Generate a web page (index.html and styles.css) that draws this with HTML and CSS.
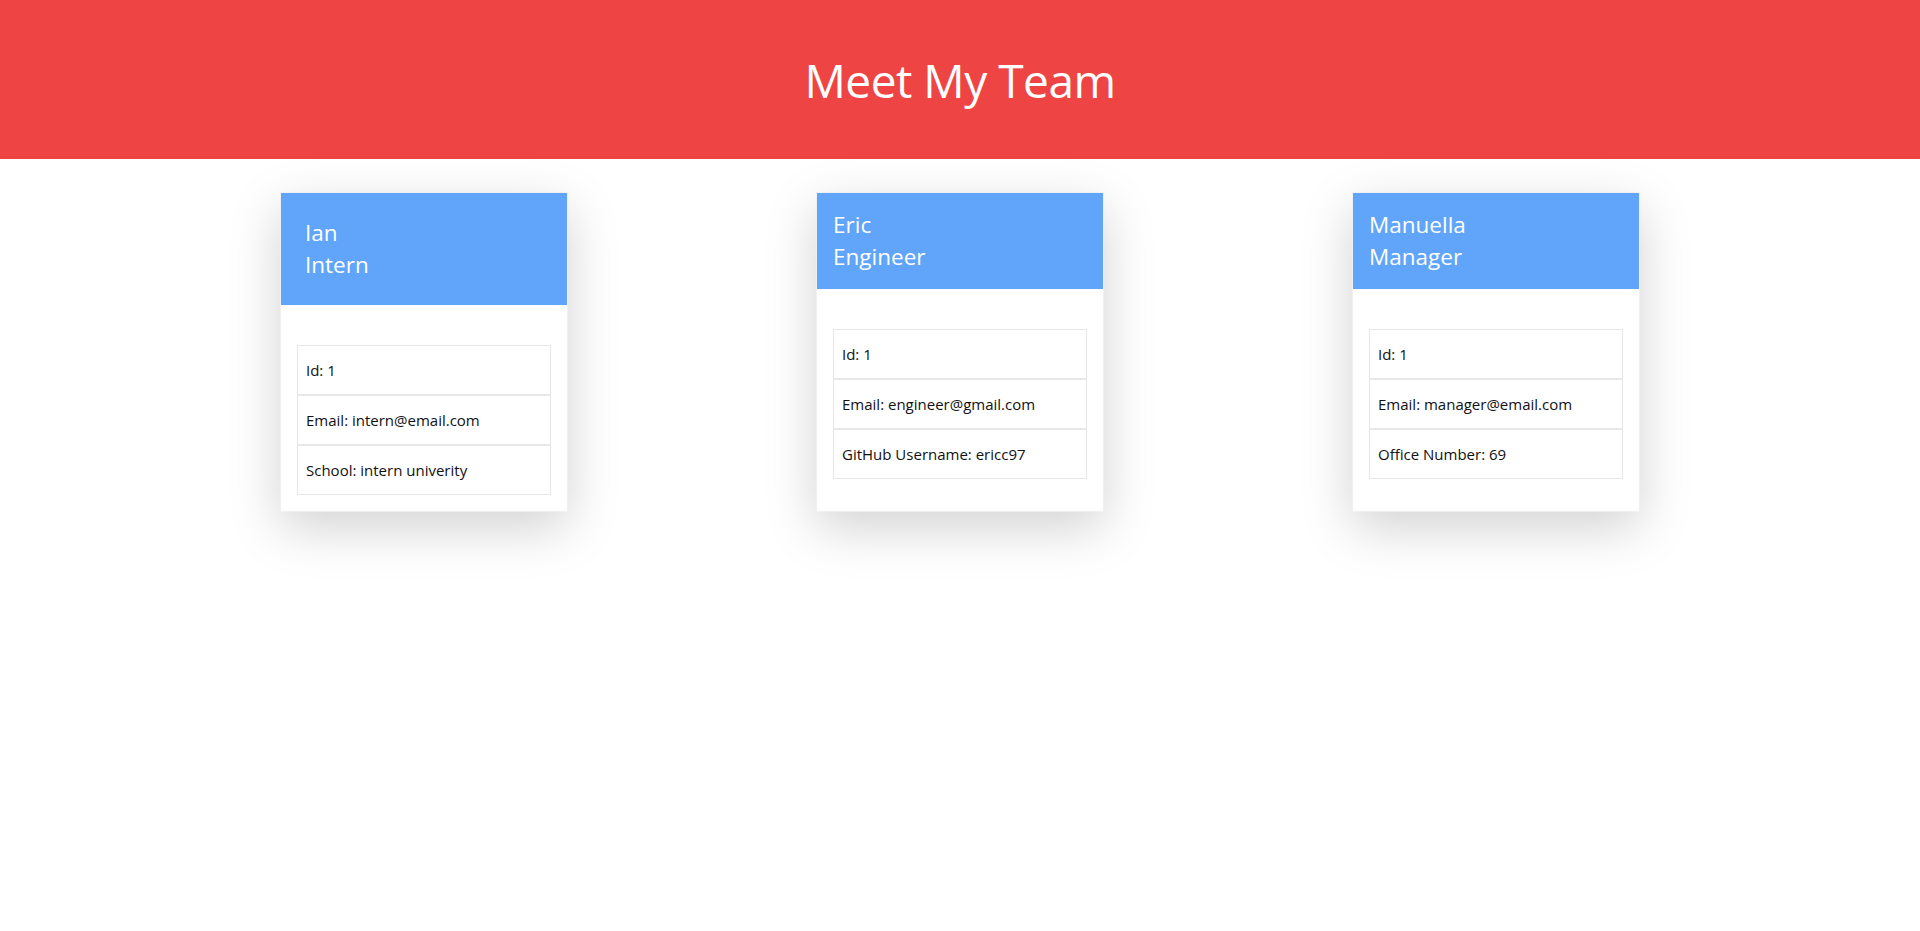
FILE: index.html
```html
<!DOCTYPE html>
<html lang="en">
<head>
<meta charset="UTF-8">
<title>Meet My Team</title>
<link rel="stylesheet" href="styles.css">
</head>
<body>
<header class="hero">
  <h1 class="hero-title">Meet My Team</h1>
</header>
<main class="team">
  <section class="card">
    <div class="card-head card-head-lg">
      <div>Ian</div>
      <div>Intern</div>
    </div>
    <div class="card-body">
      <ul class="info-list">
        <li class="info-item">Id: 1</li>
        <li class="info-item">Email: intern@email.com</li>
        <li class="info-item">School: intern univerity</li>
      </ul>
    </div>
  </section>
  <section class="card">
    <div class="card-head">
      <div>Eric</div>
      <div>Engineer</div>
    </div>
    <div class="card-body">
      <ul class="info-list">
        <li class="info-item">Id: 1</li>
        <li class="info-item">Email: engineer@gmail.com</li>
        <li class="info-item">GitHub Username: ericc97</li>
      </ul>
    </div>
  </section>
  <section class="card">
    <div class="card-head">
      <div>Manuella</div>
      <div>Manager</div>
    </div>
    <div class="card-body">
      <ul class="info-list">
        <li class="info-item">Id: 1</li>
        <li class="info-item">Email: manager@email.com</li>
        <li class="info-item">Office Number: 69</li>
      </ul>
    </div>
  </section>
</main>
</body>
</html>
```

FILE: styles.css
```css
* { box-sizing: border-box; }

html, body {
  margin: 0;
  background: #ffffff;
}

body {
  font-family: "Open Sans", "Noto Sans", "Liberation Sans", sans-serif;
  color: #111111;
}

.hero {
  height: 159px;
  background: #ef4444;
  display: flex;
  align-items: center;
  justify-content: center;
}

.hero-title {
  margin: 0;
  color: #ffffff;
  font-weight: 400;
  font-size: 46px;
  line-height: 1;
  letter-spacing: -0.5px;
}

.team {
  display: flex;
  justify-content: center;
  align-items: stretch;
  gap: 248px;
  padding: 33px 0 120px;
}

.card {
  width: 288px;
  background: #ffffff;
  border: 1px solid rgba(0, 0, 0, 0.06);
  box-shadow: 0 1rem 3rem rgba(0, 0, 0, 0.175);
}

.card-head {
  background: #60a5fa;
  color: #ffffff;
  font-size: 22.5px;
  line-height: 32px;
  padding: 16px;
}

.card-head-lg {
  padding: 24px;
}

.card-body {
  padding: 40px 16px 16px;
}

.info-list {
  list-style: none;
  margin: 0;
  padding: 0;
}

.info-item {
  border: 1px solid #e5e7eb;
  padding: 12px 8px;
  font-size: 15px;
  line-height: 24px;
  color: #111111;
}
```
